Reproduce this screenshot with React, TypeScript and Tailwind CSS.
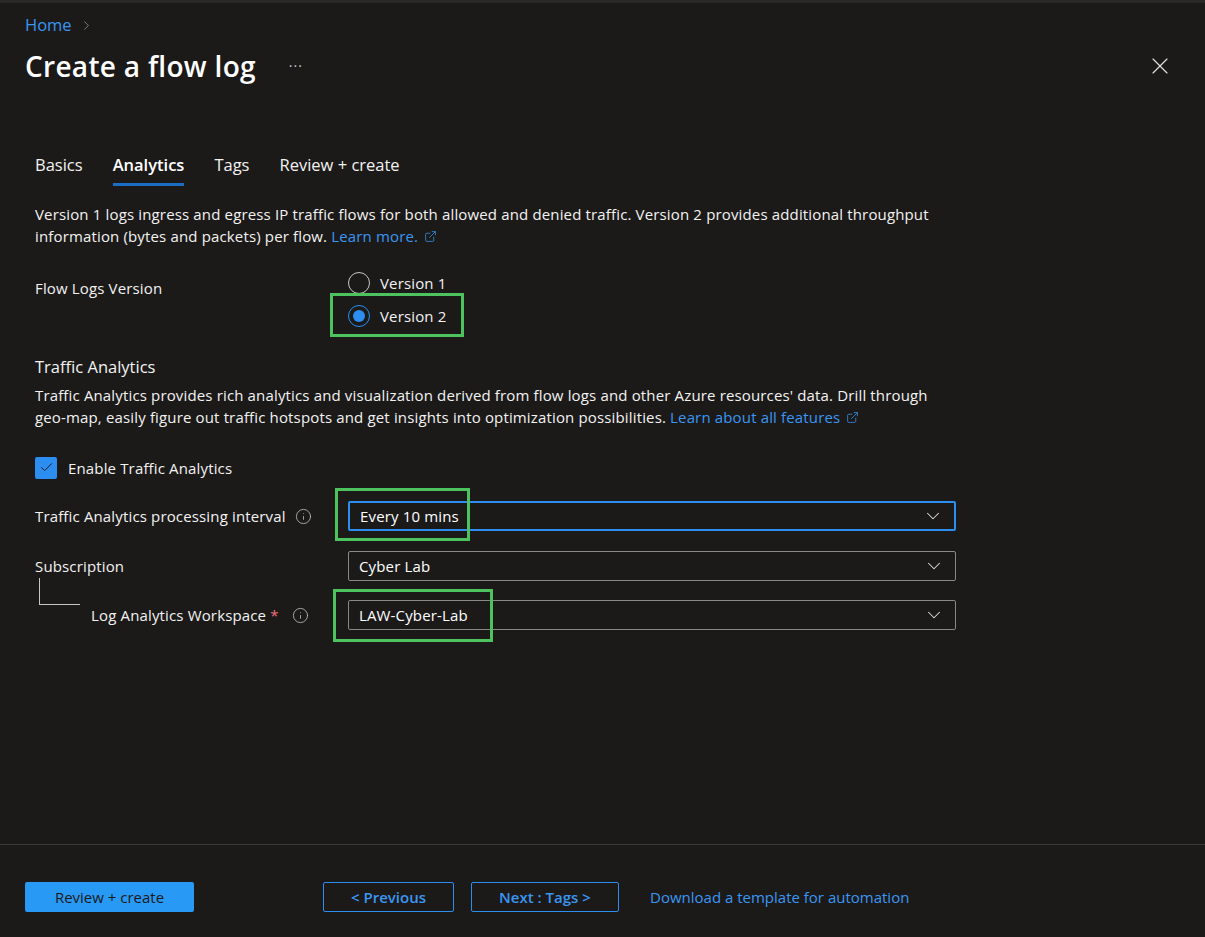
import React from 'react';
import { ChevronRight, ChevronDown, X, Check, Info, ExternalLink } from 'lucide-react';

const font = { fontFamily: '"Open Sans", "Noto Sans", sans-serif' };

const Highlight: React.FC<{ className: string }> = ({ className }) => (
  <div className={`pointer-events-none absolute border-[3px] border-[#4cc35e] ${className}`}></div>
);

const Select: React.FC<{ value: string; focused?: boolean }> = ({ value, focused }) => (
  <div
    className={`flex h-[30px] w-[608px] items-center justify-between rounded-[2px] border px-[10px] ${
      focused ? 'border-[#2b8ef0] border-[2px] px-[9px]' : 'border-[#8a8886]'
    }`}
  >
    <span className="text-white">{value}</span>
    <ChevronDown size={22} strokeWidth={1.1} className="text-[#e1dfdd]" />
  </div>
);

export default function App() {
  return (
    <div style={font} className="relative h-[937px] w-[1205px] overflow-hidden bg-[#1b1a19] text-[#f3f2f1]">
      <div className="h-[3px] w-full bg-[#2a2928]"></div>

      {/* Header */}
      <div className="px-[25px]">
        <div className="mt-[10px] flex items-center gap-[7px] text-[16.5px] text-[#3a96f2]">
          <span>Home</span>
          <ChevronRight size={15} strokeWidth={1.4} className="text-[#8a8886]" />
        </div>
        <div className="mt-[9px] flex items-center justify-between">
          <div className="flex items-center">
            <h1 className="text-[28px] font-semibold leading-[38px] tracking-[0.3px] text-white">Create a flow log</h1>
            <span className="ml-[33px] text-[14px] tracking-[1px] text-[#c8c6c4]">···</span>
          </div>
          <X size={28} strokeWidth={1} className="mr-[6px] text-[#e1dfdd]" />
        </div>
      </div>

      {/* Tabs */}
      <div className="mt-[68px] flex gap-[30px] px-[35px] text-[16.5px]">
        <div className="pb-[8px]">Basics</div>
        <div className="border-b-[3px] border-[#1a6fc4] pb-[5px] font-semibold text-white">Analytics</div>
        <div className="pb-[8px]">Tags</div>
        <div className="pb-[8px]">Review + create</div>
      </div>

      <div className="px-[35px] text-[15px] tracking-[0.15px]">
        <p className="mt-[17px] w-[910px] leading-[22px]">
          Version 1 logs ingress and egress IP traffic flows for both allowed and denied traffic. Version 2 provides additional throughput information (bytes and packets) per flow.{' '}
          <span className="text-[#3a96f2]">
            Learn more.
            <ExternalLink size={13} strokeWidth={1.4} className="ml-[6px] inline align-[-1px]" />
          </span>
        </p>

        {/* Flow logs version */}
        <div className="mt-[25px] flex">
          <div className="w-[313px] pt-[5px]">Flow Logs Version</div>
          <div className="relative flex flex-col gap-[11px]">
            <div className="flex items-center gap-[10px]">
              <div className="h-[22px] w-[22px] rounded-full border border-[#c8c6c4]"></div>
              <span>Version 1</span>
            </div>
            <div className="flex items-center gap-[10px]">
              <div className="flex h-[22px] w-[22px] items-center justify-center rounded-full border border-[#2b8ef0]">
                <div className="h-[12px] w-[12px] rounded-full bg-[#2b8ef0]"></div>
              </div>
              <span>Version 2</span>
            </div>
            <Highlight className="left-[-18px] top-[21px] h-[44px] w-[134px]" />
          </div>
        </div>

        {/* Traffic analytics */}
        <h2 className="mt-[27px] text-[16.5px] leading-[24px] tracking-normal">Traffic Analytics</h2>
        <p className="mt-[5px] w-[910px] leading-[22px]">
          Traffic Analytics provides rich analytics and visualization derived from flow logs and other Azure resources' data. Drill through geo-map, easily figure out traffic hotspots and get insights into optimization possibilities.{' '}
          <span className="text-[#3a96f2]">
            Learn about all features
            <ExternalLink size={13} strokeWidth={1.4} className="ml-[6px] inline align-[-1px]" />
          </span>
        </p>

        <div className="mt-[29px] flex items-center gap-[11px]">
          <div className="flex h-[22px] w-[22px] items-center justify-center rounded-[2px] bg-[#2b8ef0]">
            <Check size={15} strokeWidth={1.6} className="text-[#1b1a19]" />
          </div>
          <span>Enable Traffic Analytics</span>
        </div>

        <div className="mt-[22px] flex items-center">
          <div className="flex w-[313px] items-center gap-[9px]">
            <span>Traffic Analytics processing interval</span>
            <Info size={17} strokeWidth={1.1} className="text-[#c8c6c4]" />
          </div>
          <div className="relative">
            <Select value="Every 10 mins" focused />
            <Highlight className="left-[-13px] top-[-13px] h-[53px] w-[135px]" />
          </div>
        </div>

        <div className="mt-[20px] flex items-center">
          <div className="w-[313px]">Subscription</div>
          <Select value="Cyber Lab" />
        </div>

        <div className="mt-[19px] flex items-center">
          <div className="flex w-[313px] items-start">
            <div className="ml-[4px] mt-[-26px] h-[27px] w-[41px] border-b border-l border-[#c8c6c4]"></div>
            <div className="ml-[11px] flex items-center gap-[13px]">
              <span>
                Log Analytics Workspace <span className="text-[#f1707b]">*</span>
              </span>
              <Info size={17} strokeWidth={1.1} className="text-[#c8c6c4]" />
            </div>
          </div>
          <div className="relative">
            <Select value="LAW-Cyber-Lab" />
            <Highlight className="left-[-15px] top-[-11px] h-[53px] w-[160px]" />
          </div>
        </div>
      </div>

      {/* Footer */}
      <div className="absolute bottom-0 left-0 h-[93px] w-full border-t border-[#3b3a39]">
        <div className="mt-[37px] flex items-center px-[25px] text-[15px]">
          <button className="h-[30px] w-[169px] rounded-[2px] bg-[#2899f5] text-[#1b1a19]">Review + create</button>
          <button className="ml-[129px] h-[30px] w-[131px] rounded-[2px] border border-[#2b8ef0] font-semibold text-[#3a96f2]">
            &lt; Previous
          </button>
          <button className="ml-[17px] h-[30px] w-[148px] rounded-[2px] border border-[#2b8ef0] font-semibold text-[#3a96f2]">
            Next : Tags &gt;
          </button>
          <span className="ml-[31px] text-[#3a96f2]">Download a template for automation</span>
        </div>
      </div>
    </div>
  );
}
